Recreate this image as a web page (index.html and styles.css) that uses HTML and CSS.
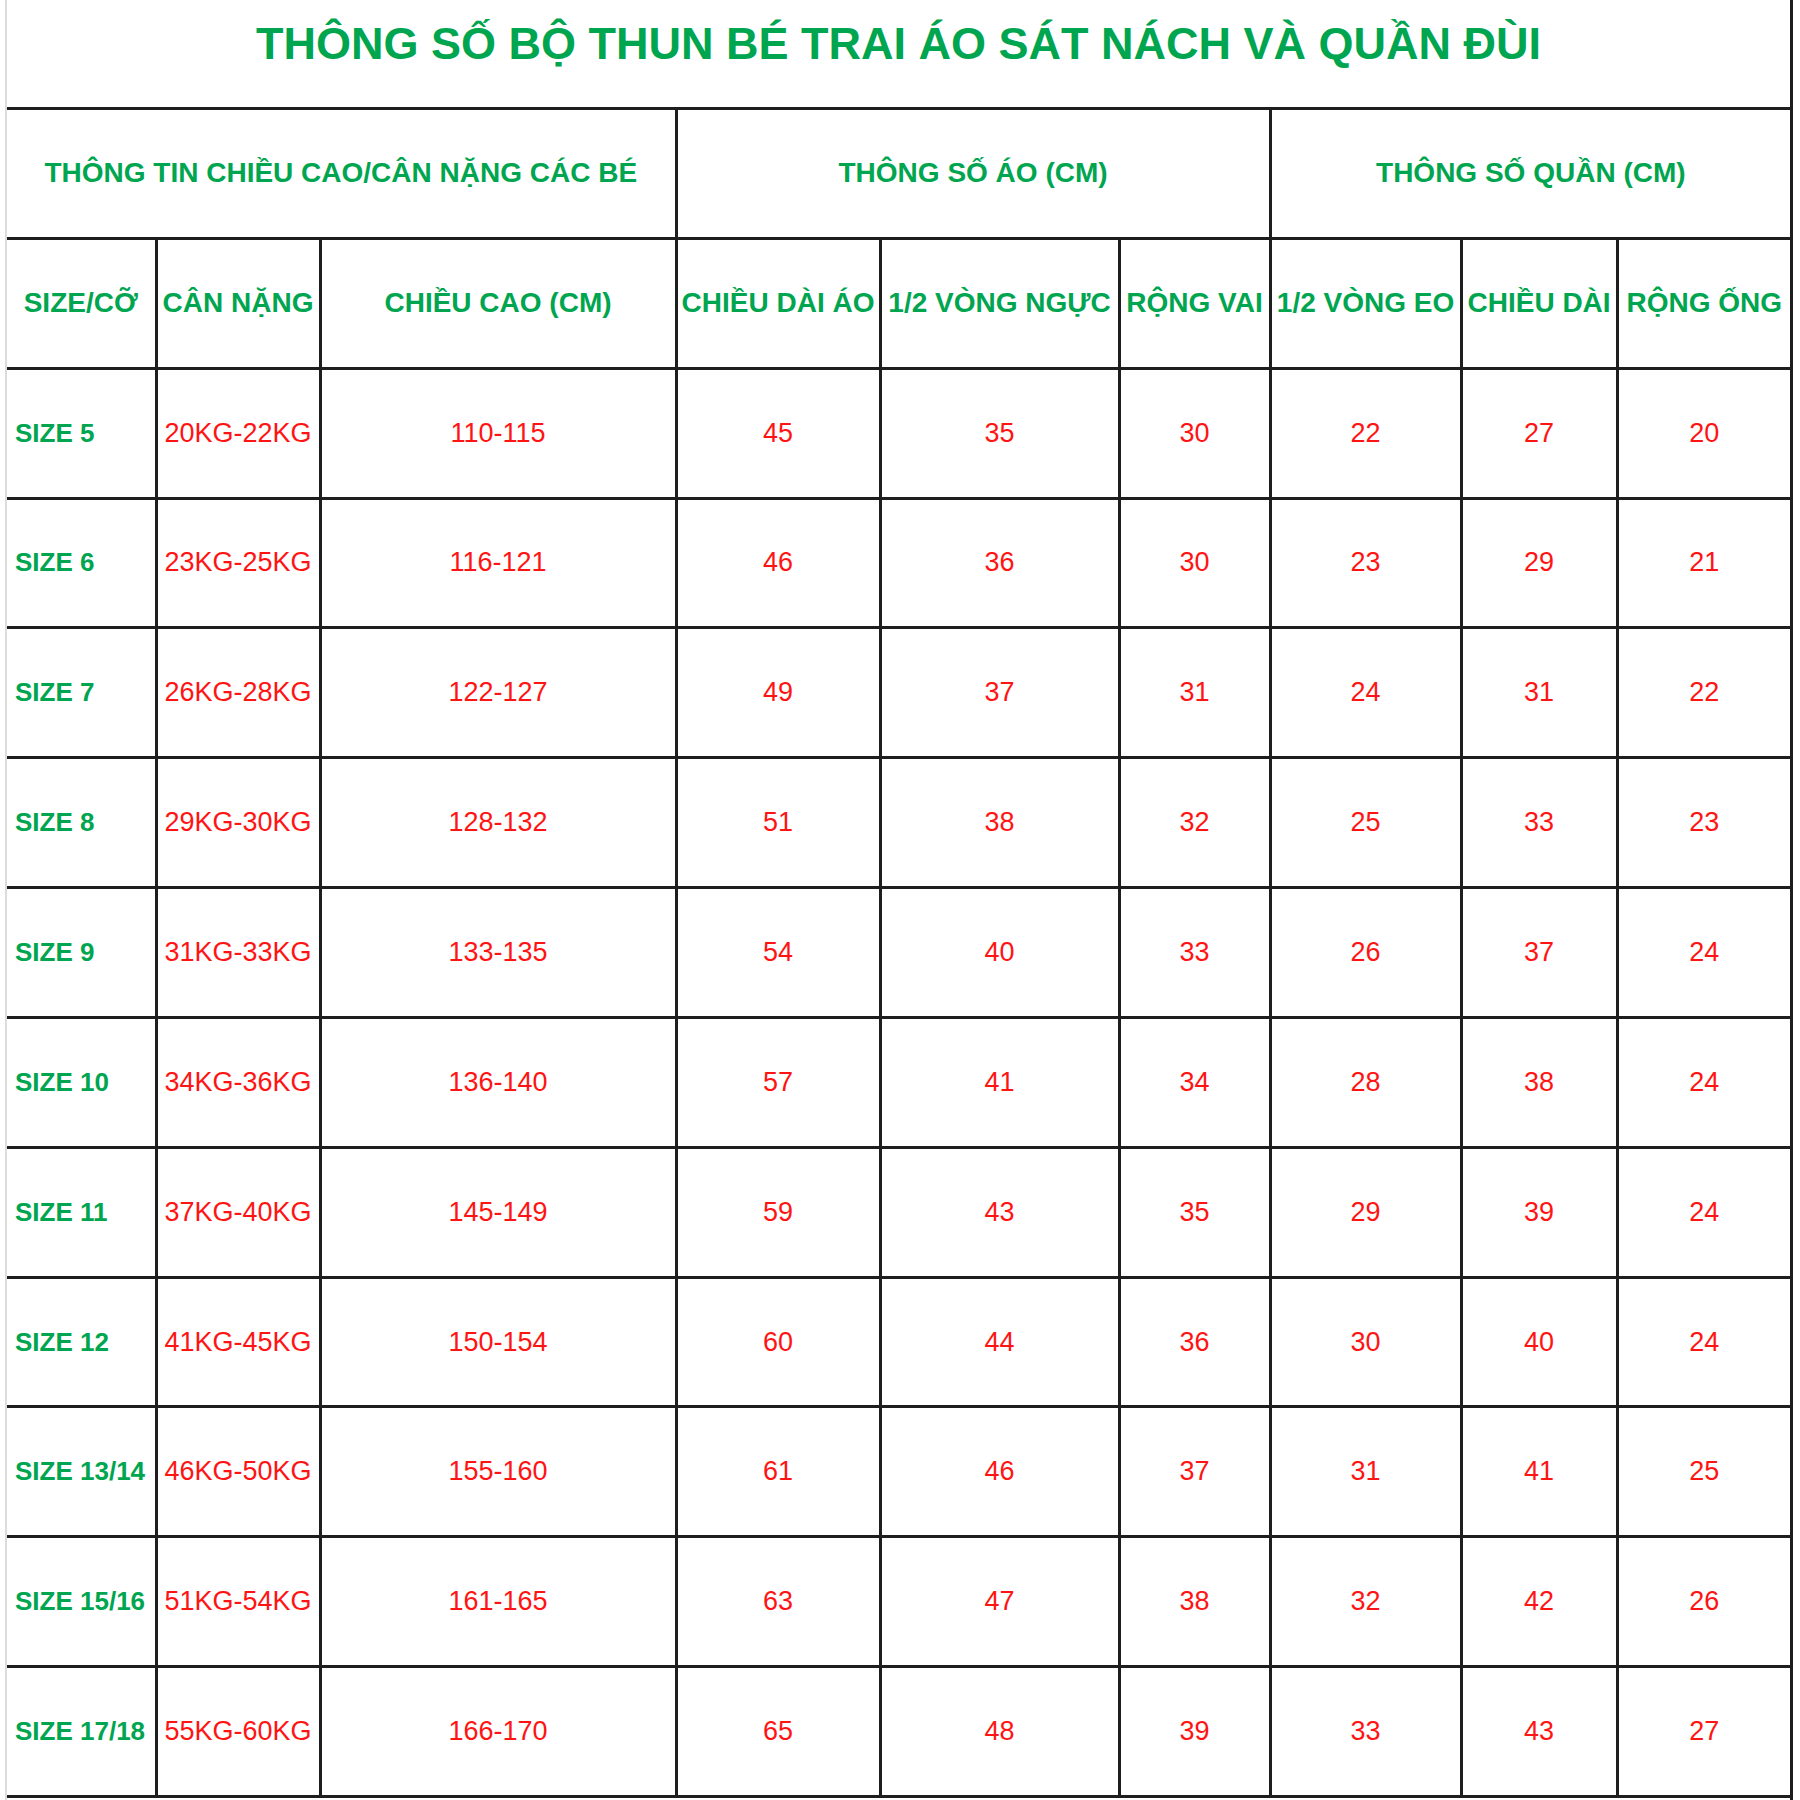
FILE: index.html
```html
<!DOCTYPE html>
<html lang="vi">
<head>
<meta charset="utf-8">
<title>Thông số bộ thun bé trai</title>
<link rel="stylesheet" href="styles.css">
</head>
<body>
<div class="sheet">
  <h1 class="title">THÔNG SỐ BỘ THUN BÉ TRAI ÁO SÁT NÁCH VÀ QUẦN ĐÙI</h1>
  <table class="spec">
    <colgroup>
      <col class="c1"><col class="c2"><col class="c3"><col class="c4"><col class="c5"><col class="c6"><col class="c7"><col class="c8"><col class="c9">
    </colgroup>
    <thead>
      <tr>
        <th colspan="3">THÔNG TIN CHIỀU CAO/CÂN NẶNG CÁC BÉ</th>
        <th colspan="3">THÔNG SỐ ÁO (CM)</th>
        <th colspan="3">THÔNG SỐ QUẦN (CM)</th>
      </tr>
      <tr>
        <th>SIZE/CỠ</th><th>CÂN NẶNG</th><th>CHIỀU CAO (CM)</th><th>CHIỀU DÀI ÁO</th><th>1/2 VÒNG NGỰC</th><th>RỘNG VAI</th><th>1/2 VÒNG EO</th><th>CHIỀU DÀI</th><th>RỘNG ỐNG</th>
      </tr>
    </thead>
    <tbody>
      <tr><td class="size">SIZE 5</td><td>20KG-22KG</td><td>110-115</td><td>45</td><td>35</td><td>30</td><td>22</td><td>27</td><td>20</td></tr>
      <tr><td class="size">SIZE 6</td><td>23KG-25KG</td><td>116-121</td><td>46</td><td>36</td><td>30</td><td>23</td><td>29</td><td>21</td></tr>
      <tr><td class="size">SIZE 7</td><td>26KG-28KG</td><td>122-127</td><td>49</td><td>37</td><td>31</td><td>24</td><td>31</td><td>22</td></tr>
      <tr><td class="size">SIZE 8</td><td>29KG-30KG</td><td>128-132</td><td>51</td><td>38</td><td>32</td><td>25</td><td>33</td><td>23</td></tr>
      <tr><td class="size">SIZE 9</td><td>31KG-33KG</td><td>133-135</td><td>54</td><td>40</td><td>33</td><td>26</td><td>37</td><td>24</td></tr>
      <tr><td class="size">SIZE 10</td><td>34KG-36KG</td><td>136-140</td><td>57</td><td>41</td><td>34</td><td>28</td><td>38</td><td>24</td></tr>
      <tr><td class="size">SIZE 11</td><td>37KG-40KG</td><td>145-149</td><td>59</td><td>43</td><td>35</td><td>29</td><td>39</td><td>24</td></tr>
      <tr><td class="size">SIZE 12</td><td>41KG-45KG</td><td>150-154</td><td>60</td><td>44</td><td>36</td><td>30</td><td>40</td><td>24</td></tr>
      <tr><td class="size">SIZE 13/14</td><td>46KG-50KG</td><td>155-160</td><td>61</td><td>46</td><td>37</td><td>31</td><td>41</td><td>25</td></tr>
      <tr><td class="size">SIZE 15/16</td><td>51KG-54KG</td><td>161-165</td><td>63</td><td>47</td><td>38</td><td>32</td><td>42</td><td>26</td></tr>
      <tr><td class="size">SIZE 17/18</td><td>55KG-60KG</td><td>166-170</td><td>65</td><td>48</td><td>39</td><td>33</td><td>43</td><td>27</td></tr>
    </tbody>
  </table>
</div>
</body>
</html>
```

FILE: styles.css
```css
html, body {
  margin: 0;
  padding: 0;
  background: #ffffff;
}

.sheet {
  margin-left: 5px;
  width: 1788px;
  height: 1800px;
  box-sizing: border-box;
  border-left: 2px solid #dcdcdc;
  border-right: 3px solid #1e1e1e;
  font-family: "Liberation Sans", Arial, sans-serif;
}

.title {
  margin: 0;
  height: 107px;
  box-sizing: border-box;
  padding-top: 21px;
  font-size: 45px;
  line-height: 45px;
  font-weight: bold;
  color: #00a550;
  text-align: center;
}

.spec {
  border-collapse: collapse;
  table-layout: fixed;
  width: 1783px;
}

.c1 { width: 149px; }
.c2 { width: 164px; }
.c3 { width: 356px; }
.c4 { width: 204px; }
.c5 { width: 239px; }
.c6 { width: 151px; }
.c7 { width: 191px; }
.c8 { width: 156px; }
.c9 { width: 173px; }

.spec tr {
  height: 129.85px;
}

.spec th,
.spec td {
  border: 3px solid #1e1e1e;
  padding: 0;
  text-align: center;
  vertical-align: middle;
  white-space: nowrap;
}

.spec tr > :first-child { border-left: none; }
.spec tr > :last-child { border-right: none; }

.spec th {
  font-size: 28px;
  font-weight: bold;
  color: #00a550;
}

.spec td {
  font-size: 27px;
  font-weight: normal;
  color: #ff1414;
}

.spec td.size {
  text-align: left;
  padding-left: 8px;
  font-size: 26px;
  font-weight: bold;
  color: #00a550;
}
```
